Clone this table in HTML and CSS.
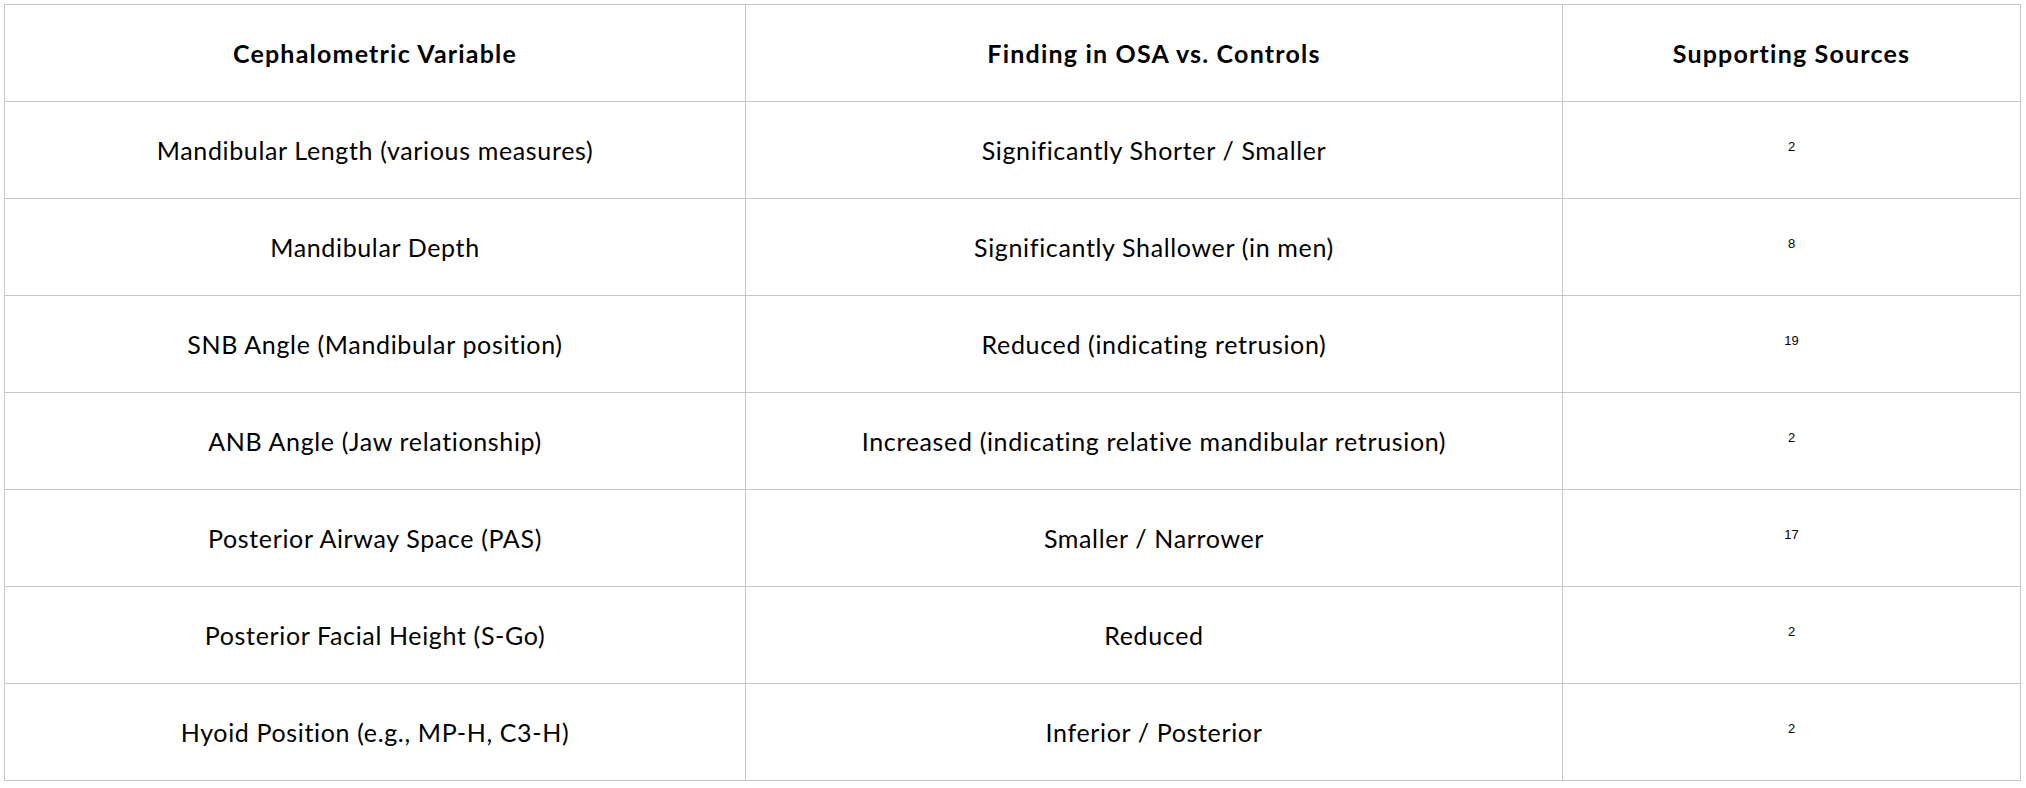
FILE: index.html
```html
<!DOCTYPE html>
<html lang="en">
<head>
<meta charset="utf-8">
<title>Cephalometric findings</title>
<link rel="stylesheet" href="styles.css">
</head>
<body>
<table class="findings">
  <colgroup>
    <col class="col-var">
    <col class="col-find">
    <col class="col-src">
  </colgroup>
  <thead>
    <tr>
      <th>Cephalometric Variable</th>
      <th>Finding in OSA vs. Controls</th>
      <th>Supporting Sources</th>
    </tr>
  </thead>
  <tbody>
    <tr><td>Mandibular Length (various measures)</td><td>Significantly Shorter / Smaller</td><td><sup class="ref">2</sup></td></tr>
    <tr><td>Mandibular Depth</td><td>Significantly Shallower (in men)</td><td><sup class="ref">8</sup></td></tr>
    <tr><td>SNB Angle (Mandibular position)</td><td>Reduced (indicating retrusion)</td><td><sup class="ref">19</sup></td></tr>
    <tr><td>ANB Angle (Jaw relationship)</td><td>Increased (indicating relative mandibular retrusion)</td><td><sup class="ref">2</sup></td></tr>
    <tr><td>Posterior Airway Space (PAS)</td><td>Smaller / Narrower</td><td><sup class="ref">17</sup></td></tr>
    <tr><td>Posterior Facial Height (S-Go)</td><td>Reduced</td><td><sup class="ref">2</sup></td></tr>
    <tr><td>Hyoid Position (e.g., MP-H, C3-H)</td><td>Inferior / Posterior</td><td><sup class="ref">2</sup></td></tr>
  </tbody>
</table>
</body>
</html>
```
FILE: styles.css
```css
html, body {
  background: #ffffff;
}
body {
  margin: 4px;
  font-family: Lato, "Noto Sans", sans-serif;
  color: #000000;
}
.findings {
  width: 2016px;
  border-collapse: collapse;
  table-layout: fixed;
  font-size: 25px;
  line-height: 36px;
}
.col-var { width: 741px; }
.col-find { width: 817px; }
.col-src { width: 458px; }
.findings th,
.findings td {
  border: 1px solid #c6c6c6;
  padding: 30px 16px;
  text-align: center;
  vertical-align: middle;
}
.findings th {
  font-weight: 700;
  letter-spacing: 1.2px;
}
.findings td {
  font-weight: 400;
  letter-spacing: 0.65px;
}
.ref {
  font-family: "Liberation Sans", Arial, sans-serif;
  font-size: 13px;
  line-height: 1;
  letter-spacing: 0;
}
```
